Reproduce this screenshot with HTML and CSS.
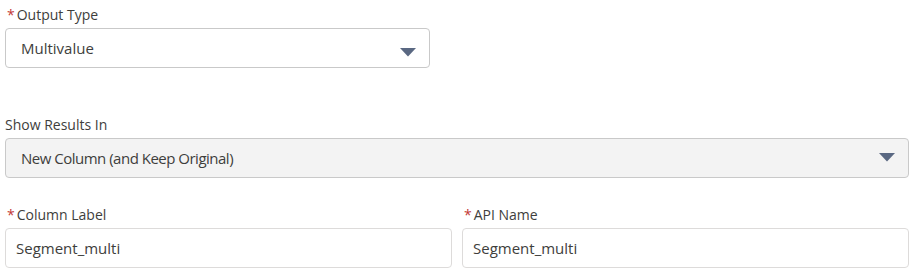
FILE: index.html
```html
<!DOCTYPE html>
<html lang="en">
<head>
    <meta charset="UTF-8">
    <title>Formula Output</title>
    <link rel="stylesheet" href="styles.css">
</head>
<body>
    <form class="panel">
        <div class="field field-first">
            <label class="field-label" for="output-type"><abbr class="req" title="required">*</abbr>Output Type</label>
            <div class="combo combo-short">
                <select id="output-type" class="combo-select">
                    <option value="multi" selected>Multivalue</option>
                    <option value="single">Single Value</option>
                </select>
                <svg class="combo-arrow arrow-low" width="16" height="9" viewBox="0 0 16 9"><path d="M0 0 H16 L8 8.5 Z"/></svg>
            </div>
        </div>

        <div class="field">
            <label class="field-label" for="show-results">Show Results In</label>
            <div class="combo">
                <select id="show-results" class="combo-select" disabled>
                    <option selected>New Column (and Keep Original)</option>
                </select>
                <svg class="combo-arrow" width="16" height="9" viewBox="0 0 16 9"><path d="M0 0 H16 L8 8.5 Z"/></svg>
            </div>
        </div>

        <div class="field-row">
            <div class="field">
                <label class="field-label" for="col-label"><abbr class="req" title="required">*</abbr>Column Label</label>
                <input id="col-label" class="text-input" type="text" value="Segment_multi">
            </div>
            <div class="field">
                <label class="field-label" for="api-name"><abbr class="req" title="required">*</abbr>API Name</label>
                <input id="api-name" class="text-input" type="text" value="Segment_multi">
            </div>
        </div>
    </form>
</body>
</html>
```

FILE: styles.css
```css
body {
    margin: 0;
    padding: 5px 8px 0 5px;
    font-family: "Segoe UI", "Open Sans", sans-serif;
    color: #3e3e3c;
    background: #fff;
}

.field {
    margin-bottom: 27px;
}

.field-first {
    margin-bottom: 47px;
}

.field-label {
    display: block;
    font-size: 14px;
    line-height: 20px;
    margin-bottom: 3px;
    color: #3e3e3c;
}

.req {
    color: #c23934;
    text-decoration: none;
    margin: 0 2px 0 2px;
}

.combo {
    position: relative;
}

.combo-short {
    width: 425px;
}

.combo-select,
.text-input {
    display: block;
    box-sizing: border-box;
    width: 100%;
    height: 40px;
    margin: 0;
    font-family: inherit;
    font-size: 15px;
    color: #3e3e3c;
    background: #fff;
    border: 1px solid #c9c9c9;
    border-radius: 4px;
    outline: none;
}

.combo-select {
    appearance: none;
    -webkit-appearance: none;
    padding: 0 40px 0 15px;
}

.combo-select:disabled {
    background: #f3f3f3;
    color: #3e3e3c;
    opacity: 1;
    letter-spacing: -0.5px;
}

.combo-arrow {
    position: absolute;
    right: 14px;
    top: 15px;
    fill: #5a6882;
    pointer-events: none;
}

.arrow-low {
    top: 20px;
}

.field-row {
    display: grid;
    grid-template-columns: 1fr 1fr;
    gap: 10px;
}

.field-row .field {
    margin-bottom: 0;
}

.text-input {
    padding: 0 10px;
    border-color: #dddbda;
}
```
